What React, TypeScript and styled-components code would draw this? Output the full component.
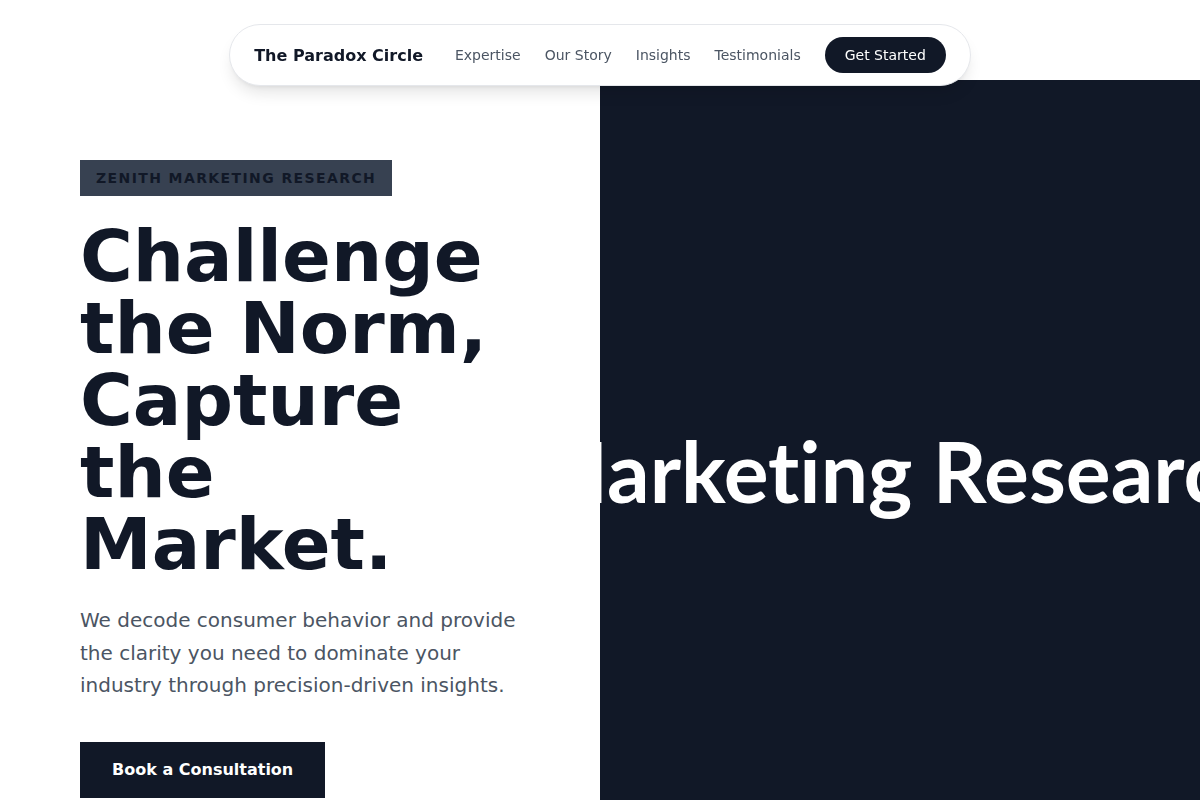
import React from "react";
import styled, { createGlobalStyle } from "styled-components";

const GlobalStyle = createGlobalStyle`
  * {
    box-sizing: border-box;
  }
  body {
    margin: 0;
    background: #ffffff;
    font-family: "DejaVu Sans", sans-serif;
    color: #111827;
  }
`;

const Page = styled.div`
  position: relative;
  min-height: 100vh;
  padding-top: 80px;
  overflow: hidden;
`;

const NavWrap = styled.header`
  position: fixed;
  top: 24px;
  left: 0;
  right: 0;
  display: flex;
  justify-content: center;
  z-index: 10;
`;

const NavPill = styled.nav`
  display: flex;
  align-items: center;
  gap: 32px;
  height: 62px;
  padding: 0 24px;
  background: #ffffff;
  border: 1px solid #e5e7eb;
  border-radius: 9999px;
  box-shadow: 0 10px 15px -3px rgba(0, 0, 0, 0.1), 0 4px 6px -4px rgba(0, 0, 0, 0.1);
`;

const Brand = styled.span`
  font-size: 16px;
  font-weight: 700;
  color: #111827;
  white-space: nowrap;
`;

const NavLinks = styled.div`
  display: flex;
  align-items: center;
  gap: 24px;
`;

const NavLink = styled.a`
  font-size: 14px;
  color: #4b5563;
  text-decoration: none;
  white-space: nowrap;
`;

const PillButton = styled.button`
  font-family: inherit;
  font-size: 14px;
  line-height: 20px;
  padding: 8px 20px;
  border: none;
  border-radius: 9999px;
  background: #111827;
  color: #ffffff;
  cursor: pointer;
`;

const Hero = styled.section`
  display: grid;
  grid-template-columns: 1fr 1fr;
  min-height: 100vh;
`;

const Copy = styled.div`
  display: flex;
  flex-direction: column;
  align-items: flex-start;
  padding: 80px 80px 0 80px;
`;

const Badge = styled.span`
  display: inline-block;
  padding: 8px 16px;
  font-size: 14px;
  line-height: 20px;
  font-weight: 700;
  letter-spacing: 0.1em;
  text-transform: uppercase;
  background: #374151;
  color: #111827;
`;

const Headline = styled.h1`
  margin: 24px 0 0;
  font-size: 72px;
  line-height: 1;
  font-weight: 700;
  color: #111827;
`;

const Lead = styled.p`
  margin: 24px 0 0;
  max-width: 448px;
  font-size: 20px;
  line-height: 1.625;
  color: #4b5563;
`;

const CtaButton = styled.button`
  margin-top: 40px;
  padding: 16px 32px;
  font-family: inherit;
  font-size: 16px;
  line-height: 24px;
  font-weight: 700;
  border: none;
  background: #111827;
  color: #ffffff;
  cursor: pointer;
`;

const DarkPanel = styled.div`
  display: flex;
  align-items: center;
  justify-content: center;
  padding-bottom: 20px;
  background: #111827;
  overflow: hidden;
`;

const PanelWord = styled.span`
  flex-shrink: 0;
  font-family: Lato, sans-serif;
  font-size: 84px;
  font-weight: 700;
  font-variant-ligatures: none;
  color: #ffffff;
  white-space: nowrap;
`;

const links = ["Expertise", "Our Story", "Insights", "Testimonials"];

export default function App() {
  return (
    <>
      <GlobalStyle />
      <Page>
        <NavWrap>
          <NavPill>
            <Brand>The Paradox Circle</Brand>
            <NavLinks>
              {links.map((l) => (
                <NavLink key={l} href="#">
                  {l}
                </NavLink>
              ))}
              <PillButton>Get Started</PillButton>
            </NavLinks>
          </NavPill>
        </NavWrap>
        <Hero>
          <Copy>
            <Badge>Zenith Marketing Research</Badge>
            <Headline>Challenge the Norm, Capture the Market.</Headline>
            <Lead>
              We decode consumer behavior and provide the clarity you need to
              dominate your industry through precision-driven insights.
            </Lead>
            <CtaButton>Book a Consultation</CtaButton>
          </Copy>
          <DarkPanel>
            <PanelWord>Marketing Research</PanelWord>
          </DarkPanel>
        </Hero>
      </Page>
    </>
  );
}
